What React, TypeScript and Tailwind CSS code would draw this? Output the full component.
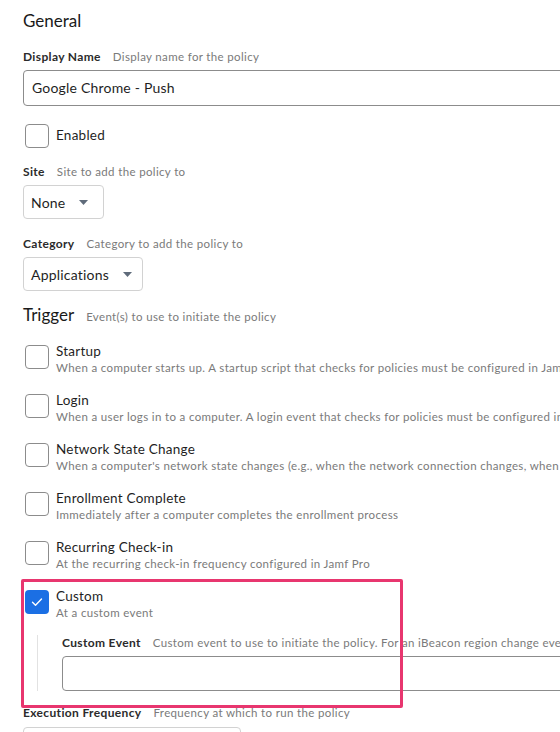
import { ReactNode } from 'react';

function FieldLabel({ name, hint }: { name: string; hint: string }) {
    return (
        <div className="flex items-baseline gap-[12px] whitespace-nowrap leading-[16px]">
            <span className="text-[12px] font-bold tracking-[0.35px] text-[#2b2b2b]">{name}</span>
            <span className="text-[11.5px] tracking-[0.35px] text-[#7a7a7a]">{hint}</span>
        </div>
    );
}

function Caret() {
    return (
        <svg width="9" height="5" viewBox="0 0 9 5" className="ml-[14px]">
            <path d="M0 0h9L4.5 5z" fill="#5f6b7a" />
        </svg>
    );
}

function Select({ value, width }: { value: string; width: string }) {
    return (
        <div className={`mt-[5px] flex h-[34px] items-center rounded-[4px] border border-[#d2d2d2] pl-[7px] text-[14px] tracking-[0.2px] text-[#1f1f1f] ${width}`}>
            {value}
            <Caret />
        </div>
    );
}

function Box({ checked = false }: { checked?: boolean }) {
    if (checked) {
        return (
            <div className="flex h-[24px] w-[24px] shrink-0 items-center justify-center rounded-[4px] bg-[#1b6fe4]">
                <svg width="12" height="10" viewBox="0 0 12 10" fill="none">
                    <path d="M1.5 5.2l3 3L10.5 2" stroke="white" strokeWidth="1.4" strokeLinecap="round" strokeLinejoin="round" />
                </svg>
            </div>
        );
    }
    return <div className="h-[24px] w-[24px] shrink-0 rounded-[4px] border border-[#8c8c8c] bg-white" />;
}

function Trigger({ title, desc, checked, children }: { title: string; desc: string; checked?: boolean; children?: ReactNode }) {
    return (
        <div>
            <div className="flex items-start gap-[7px] pl-[2px]">
                <div className="mt-[3px]">
                    <Box checked={checked} />
                </div>
                <div className="whitespace-nowrap pt-[1px]">
                    <div className="text-[13.5px] leading-[16px] tracking-[0.25px] text-[#1f1f1f]">{title}</div>
                    <div className="text-[11.5px] leading-[17px] tracking-[0.35px] text-[#7a7a7a]">{desc}</div>
                </div>
            </div>
            {children}
        </div>
    );
}

export default function App() {
    return (
        <div className="relative h-[732px] w-[560px] overflow-hidden bg-white font-['Lato',sans-serif]">
            <div className="pl-[23px] pt-[10px]">
                <h2 className="text-[17px] leading-[22px] text-[#1a1a1a]">General</h2>

                <div className="mt-[17px]">
                    <FieldLabel name="Display Name" hint="Display name for the policy" />
                    <div className="mt-[5px] flex h-[36px] w-[600px] items-center rounded-[4px] border border-[#8c8c8c] pb-[2px] pl-[8px] text-[14px] tracking-[0.2px] text-[#1f1f1f]">
                        Google Chrome - Push
                    </div>
                </div>

                <div className="mt-[18px] flex items-center gap-[7px] pl-[2px]">
                    <Box />
                    <span className="pb-[2px] text-[13.5px] tracking-[0.25px] text-[#1f1f1f]">Enabled</span>
                </div>

                <div className="mt-[16px]">
                    <FieldLabel name="Site" hint="Site to add the policy to" />
                    <Select value="None" width="w-[81px]" />
                </div>

                <div className="mt-[17px]">
                    <FieldLabel name="Category" hint="Category to add the policy to" />
                    <Select value="Applications" width="w-[120px]" />
                </div>

                <div className="mt-[13px] flex items-baseline gap-[12px] whitespace-nowrap leading-[22px]">
                    <span className="text-[17px] text-[#1a1a1a]">Trigger</span>
                    <span className="text-[11.5px] tracking-[0.35px] text-[#7a7a7a]">Event(s) to use to initiate the policy</span>
                </div>

                <div className="mt-[14px] flex flex-col gap-[15px]">
                    <Trigger title="Startup" desc="When a computer starts up. A startup script that checks for policies must be configured in Jamf Pro" />
                    <Trigger title="Login" desc="When a user logs in to a computer. A login event that checks for policies must be configured in Jamf Pro" />
                    <Trigger title="Network State Change" desc="When a computer's network state changes (e.g., when the network connection changes, when the computer name changes)" />
                    <Trigger title="Enrollment Complete" desc="Immediately after a computer completes the enrollment process" />
                    <Trigger title="Recurring Check-in" desc="At the recurring check-in frequency configured in Jamf Pro" />
                    <Trigger title="Custom" desc="At a custom event" checked>
                        <div className="ml-[14px] mt-[14px] border-l border-[#e2e2e2] pl-[24px]">
                            <FieldLabel name="Custom Event" hint="Custom event to use to initiate the policy. For an iBeacon region change event, use beaconStateChange" />
                            <div className="mt-[5px] h-[35px] w-[560px] rounded-[4px] border border-[#8c8c8c]" />
                        </div>
                    </Trigger>
                </div>

                <div className="mt-[14px]">
                    <FieldLabel name="Execution Frequency" hint="Frequency at which to run the policy" />
                    <div className="mt-[6px] h-[34px] w-[218px] rounded-[4px] border border-[#d2d2d2]" />
                </div>
            </div>

            <div className="pointer-events-none absolute left-[21px] top-[579px] h-[129px] w-[382px] rounded-[2px] border-[3px] border-[#e8366f]" />
        </div>
    );
}
